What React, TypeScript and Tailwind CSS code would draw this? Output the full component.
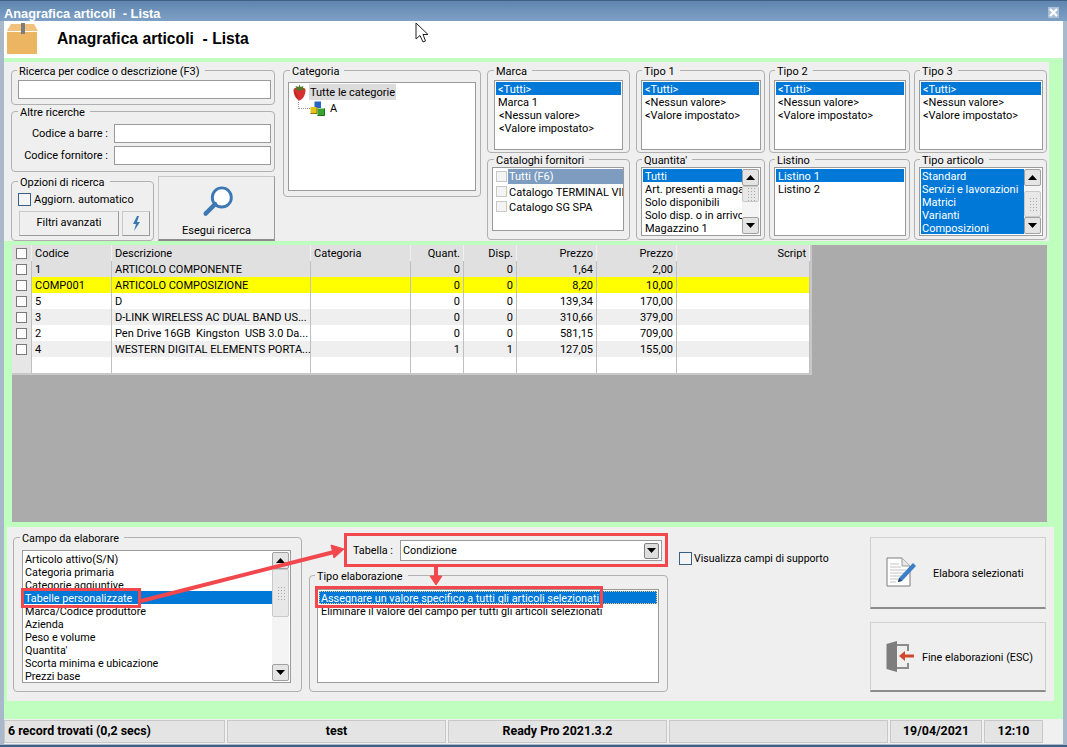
import type { ReactNode } from 'react';

const gridCols = 'grid grid-cols-[20px_80px_199px_100px_53px_53px_80px_80px_133px]';

const headers = ['Codice', 'Descrizione', 'Categoria', 'Quant.', 'Disp.', 'Prezzo', 'Prezzo', 'Script'];

const rows = [
  { bg: 'bg-[#e0e0e0]', cells: ['1', 'ARTICOLO COMPONENTE', '', '0', '0', '1,64', '2,00', ''] },
  { bg: 'bg-[#ffff00]', cells: ['COMP001', 'ARTICOLO COMPOSIZIONE', '', '0', '0', '8,20', '10,00', ''] },
  { bg: 'bg-white', cells: ['5', 'D', '', '0', '0', '139,34', '170,00', ''] },
  { bg: 'bg-[#efefef]', cells: ['3', 'D-LINK WIRELESS AC DUAL BAND US...', '', '0', '0', '310,66', '379,00', ''] },
  { bg: 'bg-white', cells: ['2', 'Pen Drive 16GB  Kingston  USB 3.0 Da...', '', '0', '0', '581,15', '709,00', ''] },
  { bg: 'bg-[#efefef]', cells: ['4', 'WESTERN DIGITAL ELEMENTS PORTA...', '', '1', '1', '127,05', '155,00', ''] },
];

const campi = [
  'Articolo attivo(S/N)',
  'Categoria primaria',
  'Categorie aggiuntive',
  'Tabelle personalizzate',
  'Marca/Codice produttore',
  'Azienda',
  'Peso e volume',
  "Quantita'",
  'Scorta minima e ubicazione',
  'Prezzi base',
];

function Group({
  title,
  className,
  bodyClass,
  legendClass = 'ml-[6px]',
  children,
}: {
  title: string;
  className: string;
  bodyClass: string;
  legendClass?: string;
  children: ReactNode;
}) {
  return (
    <fieldset className={`min-w-0 rounded-[4px] border border-[#b0b0b0] ${className}`}>
      <legend className={`pl-[2px] pr-[5px] leading-[13px] whitespace-nowrap ${legendClass}`}>
        <span className="block translate-y-[1px]">{title}</span>
      </legend>
      <div className={bodyClass}>{children}</div>
    </fieldset>
  );
}

function Row({ text, selected, indent = 'pl-[2px]' }: { text: string; selected?: boolean; indent?: string }) {
  return (
    <div className={`h-[13px] leading-[15px] whitespace-nowrap overflow-hidden ${indent} ${selected ? 'bg-[#0078d7] text-white' : ''}`}>
      {text}
    </div>
  );
}

function ListBox({ className, children }: { className: string; children: ReactNode }) {
  return <div className={`border border-[#9a9a9a] bg-white p-[1px] overflow-hidden ${className}`}>{children}</div>;
}

function Arrow({ up }: { up?: boolean }) {
  return (
    <svg width="9" height="5" viewBox="0 0 9 5">
      <path d={up ? 'M4.5 0L9 5H0Z' : 'M4.5 5L9 0H0Z'} fill="#000" />
    </svg>
  );
}

function ScrollBar({ thumbClass }: { thumbClass: string }) {
  return (
    <div className="w-[17px] h-full shrink-0 flex flex-col bg-[#f4f4f4]">
      <div className="h-[17px] shrink-0 flex items-center justify-center rounded-[2px] border border-[#a0a0a0] bg-[#e4e4e4]">
        <Arrow up />
      </div>
      <div className={`shrink-0 rounded-[2px] border border-[#c8c8c8] bg-[#e8e8e8] flex items-center justify-center ${thumbClass}`}>
        <div className="w-[8px] h-[14px] bg-[radial-gradient(#a8a8a8_1px,transparent_1px)] bg-[length:3px_3px]" />
      </div>
      <div className="flex-1" />
      <div className="h-[17px] shrink-0 flex items-center justify-center rounded-[2px] border border-[#a0a0a0] bg-[#e4e4e4]">
        <Arrow />
      </div>
    </div>
  );
}

function Check({ className = 'border-[#7a7a7a] bg-white' }: { className?: string }) {
  return <div className={`w-[11px] h-[11px] shrink-0 border ${className}`} />;
}

function Strawberry() {
  return (
    <svg width="15" height="17" viewBox="0 0 14 17" className="shrink-0">
      <path d="M1 6C1 4 3 3.5 7 3.5S13 4 13 6C13 11 10 16 7 16.5 4 16 1 11 1 6Z" fill="#d5302f" />
      <path d="M2 6.5C2.5 10 4 14 6 15.5 4 11 3 8 2 6.500Z" fill="#a81f20" />
      <path d="M7 0.5L8 3L11 2L10 4.500L12.500 6L9 5.800L7 7L5 5.800L1.500 6L4 4.500L3 2L6 3Z" fill="#4f7a2a" />
    </svg>
  );
}

function Cubes() {
  return (
    <svg width="15" height="15" viewBox="0 0 15 15" className="shrink-0">
      <rect x="4.500" y="0.500" width="6.500" height="6.500" fill="#2a66c8" />
      <rect x="0.500" y="6" width="6.500" height="6.500" fill="#e5c21c" />
      <rect x="7.500" y="7.500" width="7" height="7" fill="#3aa52e" />
      <path d="M0.500 12.500H7V6" fill="none" stroke="#8a7510" />
      <path d="M7.500 14.500H14.500V7.500" fill="none" stroke="#1d6e17" />
    </svg>
  );
}

function DocIcon() {
  return (
    <svg width="31" height="31" viewBox="0 0 31 31" className="shrink-0">
      <path d="M1 1H16L24 9V29H1Z" fill="#fff" stroke="#7c7c7c" />
      <path d="M16 1V9H24" fill="#e8e8e8" stroke="#9a9a9a" />
      <path d="M4 7H13M4 10H15M4 13H20M4 16H20M4 19H16M4 22H12M4 25H10" stroke="#c4c4c4" strokeWidth="1.200" />
      <path d="M12 25L13 21L27 6L30 9L16 24Z" fill="#3d7fc6" />
      <path d="M12 25L13 21L16 24Z" fill="#2a3f5c" />
    </svg>
  );
}

function DoorIcon() {
  return (
    <svg width="30" height="31" viewBox="0 0 30 31" className="shrink-0">
      <path d="M11 4H22V10M22 22V27H11" fill="none" stroke="#8c8c8c" strokeWidth="2" />
      <path d="M0.500 3L11 0V31L0.500 28Z" fill="#7d7d7d" />
      <path d="M13 15L19 10V13.500H28V16.500H19V20Z" fill="#d2482c" />
    </svg>
  );
}

function Overlay() {
  const red = '#f1474d';
  return (
    <svg width="1067" height="747" viewBox="0 0 1067 747" className="absolute left-0 top-0 pointer-events-none">
      <rect x="22.500" y="589.500" width="117" height="17" fill="none" stroke={red} strokeWidth="3" />
      <rect x="345.500" y="534.500" width="321" height="31" fill="none" stroke={red} strokeWidth="3" />
      <rect x="316.500" y="587.500" width="285" height="19" fill="none" stroke={red} strokeWidth="3" />
      <path d="M141 601L334 552" stroke={red} strokeWidth="4" />
      <path d="M344 549L331 545L334 558Z" fill={red} stroke={red} />
      <path d="M436 566V578" stroke={red} strokeWidth="4" />
      <path d="M436 585L430 576H442Z" fill={red} stroke={red} />
      <path d="M416 23V39L420 35.500L423 42L425.500 41L423 34.500H428Z" fill="#fff" stroke="#222" />
    </svg>
  );
}

export default function App() {
  return (
    <div className="relative w-[1067px] h-[747px] overflow-hidden flex flex-col bg-[#a9b9cb] text-[11px] text-black font-['Roboto',sans-serif]">
      {/* Title bar */}
      <div className="h-[21px] shrink-0 flex items-center justify-between pl-[4px] pr-[8px] pt-[2px] border-t border-[#3f5f84] bg-gradient-to-b from-[#5f86b0] to-[#7fa0c5]">
        <span className="translate-y-[2px] text-white font-bold text-[12.8px] whitespace-pre font-['Liberation_Sans',sans-serif]">Anagrafica articoli  - Lista</span>
        <div className="w-[11px] h-[11px] flex items-center justify-center bg-[#a9bfd8]">
          <svg width="9" height="9" viewBox="0 0 9 9">
            <path d="M1 1L8 8M8 1L1 8" stroke="#fff" strokeWidth="2.200" />
          </svg>
        </div>
      </div>

      <div className="flex-1 mx-[4px] min-h-0 flex flex-col bg-[#c0fec0]">
        {/* Header */}
        <div className="h-[37px] shrink-0 flex items-center pb-[2px] bg-white">
          <svg width="31" height="31" viewBox="0 0 31 31" className="ml-[3px] shrink-0">
            <path d="M4 1H27L31 8H0Z" fill="#f0c27e" />
            <rect x="0" y="9" width="30" height="22" fill="#ebb562" />
            <rect x="14" y="0" width="4" height="11" fill="#7d7d7d" />
          </svg>
          <span className="ml-[19px] text-[15.7px] font-bold whitespace-pre font-['Liberation_Sans',sans-serif]">Anagrafica articoli  - Lista</span>
        </div>

        {/* Filters */}
        <div className="mt-[4px] w-[1045px] h-[179px] shrink-0 flex bg-[#efefef] pl-[7px] pt-[2px]">
          <div className="w-[264px] shrink-0 flex flex-col">
            <Group title="Ricerca per codice o descrizione (F3)" className="h-[41px]" bodyClass="pl-[6px] pr-[3px] pt-[3px]" legendClass="ml-[5px]">
              <div className="h-[19px] border border-[#9a9a9a] bg-white" />
            </Group>
            <Group title="Altre ricerche" className="h-[67px]" bodyClass="pl-[6px] pr-[3px] pt-[6px] flex flex-col gap-[3px]">
              <div className="flex items-center justify-end">
                <span className="mr-[6px] translate-y-[1px] whitespace-nowrap">Codice a barre :</span>
                <div className="w-[157px] h-[19px] border border-[#9a9a9a] bg-white" />
              </div>
              <div className="flex items-center justify-end">
                <span className="mr-[6px] translate-y-[1px] whitespace-nowrap">Codice fornitore :</span>
                <div className="w-[157px] h-[19px] border border-[#9a9a9a] bg-white" />
              </div>
            </Group>
            <div className="flex gap-[4px] mt-[3px] items-start">
              <Group title="Opzioni di ricerca" className="w-[143px] h-[66px]" bodyClass="pl-[6px] pr-[3px] pt-[3px]">
                <div className="flex items-center gap-[3px]">
                  <Check className="!w-[13px] !h-[13px] border-[#3a5f86] bg-[#f4f4f4]" />
                  <span className="translate-y-[1px] whitespace-nowrap">Aggiorn. automatico</span>
                </div>
                <div className="flex gap-[3px] mt-[3px] pl-[1px]">
                  <div className="w-[100px] h-[25px] flex items-center justify-center border border-[#c8c8c8] border-b-[#9a9a9a] border-r-[#9a9a9a]">Filtri avanzati</div>
                  <div className="w-[28px] h-[25px] flex items-center justify-center border border-[#c8c8c8] border-b-[#9a9a9a] border-r-[#9a9a9a]">
                    <svg width="9" height="15" viewBox="0 0 9 15">
                      <path d="M5 0L1 8H4L2 15L8 6H5L7 0Z" fill="#3c78b4" />
                    </svg>
                  </div>
                </div>
              </Group>
              <div className="w-[117px] h-[65px] mt-[1px] flex flex-col items-center border border-[#c8c8c8] border-b-2 border-b-[#8c8c8c] border-r-[#9a9a9a]">
                <svg width="32" height="32" viewBox="0 0 32 32" className="mt-[9px] ml-[2px]">
                  <circle cx="20" cy="12" r="10" fill="#fff" stroke="#3c78b4" strokeWidth="3" />
                  <path d="M13 19L3 29" stroke="#3c78b4" strokeWidth="4.500" strokeLinecap="round" />
                </svg>
                <span className="mt-[6px] whitespace-nowrap">Esegui ricerca</span>
              </div>
            </div>
          </div>

          <Group title="Categoria" className="ml-[8px] w-[198px] h-[133px] shrink-0" bodyClass="px-[4px] pt-[5px]">
            <div className="h-[109px] border border-[#9a9a9a] bg-white pl-[3px] pt-[1px]">
              <div className="flex items-center h-[16px]">
                <Strawberry />
                <span className="ml-[2px] px-[1px] h-[16px] leading-[18px] bg-[#dcdcdc] whitespace-nowrap overflow-hidden">Tutte le categorie</span>
              </div>
              <div className="flex items-center h-[16px] ml-[6px]">
                <div className="w-[12px] h-[9px] mb-[8px] border-l border-b border-dotted border-[#999] shrink-0" />
                <Cubes />
                <span className="ml-[5px] translate-y-[1px] leading-[14px]">A</span>
              </div>
            </div>
          </Group>

          <div className="ml-[6px] w-[560px] shrink-0 grid grid-cols-[149px_133px_145px_133px] grid-rows-[89px_87px]">
            <Group title="Marca" className="mr-[6px]" bodyClass="pl-[6px] pr-[6px] pt-[3px]" legendClass="ml-[6px]">
              <ListBox className="h-[70px]">
                <Row text="<Tutti>" selected />
                <Row text="Marca 1" />
                <Row text="<Nessun valore>" indent="pl-[3px]" />
                <Row text="<Valore impostato>" indent="pl-[3px]" />
              </ListBox>
            </Group>
            <Group title="Tipo 1" className="mr-[4px]" bodyClass="pl-[4px] pr-[3px] pt-[3px]" legendClass="ml-[5px]">
              <ListBox className="h-[70px]">
                <Row text="<Tutti>" selected />
                <Row text="<Nessun valore>" />
                <Row text="<Valore impostato>" />
              </ListBox>
            </Group>
            <Group title="Tipo 2" className="mr-[4px]" bodyClass="pl-[4px] pr-[3px] pt-[3px]" legendClass="ml-[5px]">
              <ListBox className="h-[70px]">
                <Row text="<Tutti>" selected />
                <Row text="<Nessun valore>" />
                <Row text="<Valore impostato>" />
              </ListBox>
            </Group>
            <Group title="Tipo 3" bodyClass="pl-[4px] pr-[3px] pt-[3px]" className="" legendClass="ml-[5px]">
              <ListBox className="h-[70px]">
                <Row text="<Tutti>" selected />
                <Row text="<Nessun valore>" />
                <Row text="<Valore impostato>" />
              </ListBox>
            </Group>

            <Group title="Cataloghi fornitori" className="mr-[6px]" bodyClass="pl-[4px] pr-[5px] pt-[1px]" legendClass="ml-[6px]">
              <div className="h-[64px] border border-[#9a9a9a] bg-white pl-[3px] pt-[1px] overflow-hidden">
                <div className="flex items-center h-[15px]">
                  <Check className="border-[#c8c8c8] bg-[#f4f4f4]" />
                  <span className="ml-[1px] flex-1 h-[15px] pl-[1px] leading-[16px] bg-[#7d9cc0] text-white overflow-hidden">Tutti (F6)</span>
                </div>
                <div className="flex items-center h-[15px]">
                  <Check className="border-[#c8c8c8] bg-[#f4f4f4]" />
                  <span className="ml-[2px] h-[15px] leading-[17px] whitespace-nowrap overflow-hidden">Catalogo TERMINAL VID</span>
                </div>
                <div className="flex items-center h-[15px]">
                  <Check className="border-[#c8c8c8] bg-[#f4f4f4]" />
                  <span className="ml-[2px] h-[15px] leading-[17px] whitespace-nowrap">Catalogo SG SPA</span>
                </div>
              </div>
            </Group>
            <Group title="Quantita'" className="mr-[4px]" bodyClass="pl-[4px] pr-[3px] pt-[1px]" legendClass="ml-[5px]">
              <ListBox className="h-[69px] flex">
                <div className="flex-1 min-w-0 overflow-hidden">
                  <Row text="Tutti" selected />
                  <Row text="Art. presenti a magazzino" />
                  <Row text="Solo disponibili" />
                  <Row text="Solo disp. o in arrivo" />
                  <Row text="Magazzino 1" />
                </div>
                <ScrollBar thumbClass="h-[16px]" />
              </ListBox>
            </Group>
            <Group title="Listino" className="mr-[4px]" bodyClass="pl-[4px] pr-[3px] pt-[1px]" legendClass="ml-[5px]">
              <ListBox className="h-[69px]">
                <Row text="Listino 1" selected />
                <Row text="Listino 2" />
              </ListBox>
            </Group>
            <Group title="Tipo articolo" className="" bodyClass="pl-[4px] pr-[3px] pt-[1px]" legendClass="ml-[5px]">
              <ListBox className="h-[69px] flex">
                <div className="flex-1 min-w-0 overflow-hidden bg-[#0078d7]">
                  <Row text="Standard" selected indent="pl-[1px]" />
                  <Row text="Servizi e lavorazioni" selected indent="pl-[1px]" />
                  <Row text="Matrici" selected indent="pl-[1px]" />
                  <Row text="Varianti" selected indent="pl-[1px]" />
                  <Row text="Composizioni" selected indent="pl-[1px]" />
                </div>
                <ScrollBar thumbClass="h-[26px] mt-[5px]" />
              </ListBox>
            </Group>
          </div>
        </div>

        {/* Articles table */}
        <div className="mt-[4px] ml-[8px] w-[1035px] h-[277px] shrink-0 bg-[#ababab]">
          <div className="w-[800px] border-r-2 border-b-2 border-[#c8c8c8]">
            <div className={`${gridCols} h-[16px] bg-[#e0e0e0]`}>
              <div className="h-[16px] flex items-center justify-center border-r border-[#f0f0f0]">
                <Check />
              </div>
              {headers.map((h, i) => (
                <div key={i} className={`h-[16px] leading-[18px] overflow-hidden border-r border-[#f0f0f0] px-[3px] ${i > 2 ? 'text-right' : ''}`}>
                  {h}
                </div>
              ))}
            </div>
            {rows.map((r) => (
              <div key={r.cells[0]} className={`${gridCols} h-[16px] ${r.bg}`}>
                <div className="h-[16px] flex items-center justify-center bg-[#e6e6e6] border-r border-[#c0c0c0]">
                  <Check />
                </div>
                {r.cells.map((c, i) => (
                  <div key={i} className={`h-[16px] leading-[18px] border-r border-[#c0c0c0] px-[3px] whitespace-pre overflow-hidden ${i > 2 ? 'text-right' : ''}`}>
                    {c}
                  </div>
                ))}
              </div>
            ))}
            <div className={`${gridCols} h-[16px] bg-white`}>
              <div className="bg-[#e6e6e6] border-r border-[#c0c0c0]" />
              {headers.map((h, i) => (
                <div key={i} className="border-r border-[#c0c0c0]" />
              ))}
            </div>
          </div>
        </div>

        {/* Bulk edit */}
        <div className="mt-[5px] ml-[3px] w-[1047px] h-[174px] shrink-0 flex bg-[#efefef] pl-[6px] pt-[4px] text-[10.8px]">
          <Group title="Campo da elaborare" className="w-[289px] h-[161px] shrink-0" bodyClass="pl-[8px] pr-[10px] pt-[6px]" legendClass="ml-[6px]">
            <ListBox className="h-[133px] flex">
              <div className="flex-1 min-w-0 overflow-hidden">
                {campi.map((c) => (
                  <Row key={c} text={c} selected={c === 'Tabelle personalizzate'} indent="pl-[1px]" />
                ))}
              </div>
              <ScrollBar thumbClass="h-[48px]" />
            </ListBox>
          </Group>

          <div className="ml-[7px] w-[359px] shrink-0 pt-[9px]">
            <div className="flex items-center h-[21px] pl-[44px]">
              <span className="w-[47px] shrink-0 translate-y-[1px] whitespace-nowrap">Tabella :</span>
              <div className="w-[262px] h-[21px] flex items-center justify-between border border-[#9a9a9a] bg-white pl-[2px] pr-[2px]">
                <span className="translate-y-[1px]">Condizione</span>
                <div className="w-[15px] h-[16px] flex items-center justify-center rounded-[2px] border border-[#808080] bg-[#dedede]">
                  <Arrow />
                </div>
              </div>
            </div>
            <Group title="Tipo elaborazione" className="mt-[8px] h-[123px]" bodyClass="pl-[7px] pr-[8px] pt-[7px]" legendClass="ml-[5px]">
              <ListBox className="h-[94px]">
                <div className="h-[13px] leading-[13px] pl-[1px] border border-dotted border-[#f5c77e] bg-[#0078d7] text-white whitespace-nowrap overflow-hidden">
                  Assegnare un valore specifico a tutti gli articoli selezionati
                </div>
                <Row text="Eliminare il valore del campo per tutti gli articoli selezionati" />
              </ListBox>
            </Group>
          </div>

          <div className="ml-[11px] w-[191px] shrink-0 pt-[20px]">
            <div className="flex items-center gap-[2px]">
              <Check className="!w-[13px] !h-[13px] border-[#3a5f86] bg-[#f4f4f4]" />
              <span className="whitespace-nowrap text-[10.5px]">Visualizza campi di supporto</span>
            </div>
          </div>

          <div className="w-[176px] shrink-0 pt-[6px] flex flex-col gap-[13px]">
            <div className="h-[72px] flex items-center pl-[15px] border border-[#cfcfcf] border-b-2 border-b-[#8c8c8c]">
              <DocIcon />
              <span className="ml-[16px] translate-y-[2px] whitespace-nowrap">Elabora selezionati</span>
            </div>
            <div className="h-[70px] flex items-center pl-[15px] border border-[#cfcfcf] border-b-2 border-b-[#8c8c8c]">
              <DoorIcon />
              <span className="ml-[6px] translate-y-[2px] whitespace-nowrap">Fine elaborazioni (ESC)</span>
            </div>
          </div>
        </div>

        {/* Status bar */}
        <div className="mt-auto h-[25px] shrink-0 flex gap-[2px] bg-[#f0f0f0] pt-[1px] font-bold text-[12.4px]">
          <div className="w-[221px] h-[23px] flex items-center pl-[3px] bg-[#e4e4e4] border border-[#c8c8c8]">6 record trovati (0,2 secs)</div>
          <div className="w-[219px] h-[23px] flex items-center justify-center bg-[#e4e4e4] border border-[#c8c8c8]">test</div>
          <div className="w-[219px] h-[23px] flex items-center justify-center bg-[#e4e4e4] border border-[#c8c8c8]">Ready Pro 2021.3.2</div>
          <div className="w-[219px] h-[23px] bg-[#e4e4e4] border border-[#c8c8c8]" />
          <div className="w-[92px] h-[23px] flex items-center justify-center bg-[#e4e4e4] border border-[#c8c8c8]">19/04/2021</div>
          <div className="w-[59px] h-[23px] flex items-center justify-center bg-[#e4e4e4] border border-[#c8c8c8]">12:10</div>
        </div>
      </div>
      <div className="h-[3px] shrink-0 border-b-2 border-[#3f5f84]" />

      <Overlay />
    </div>
  );
}
